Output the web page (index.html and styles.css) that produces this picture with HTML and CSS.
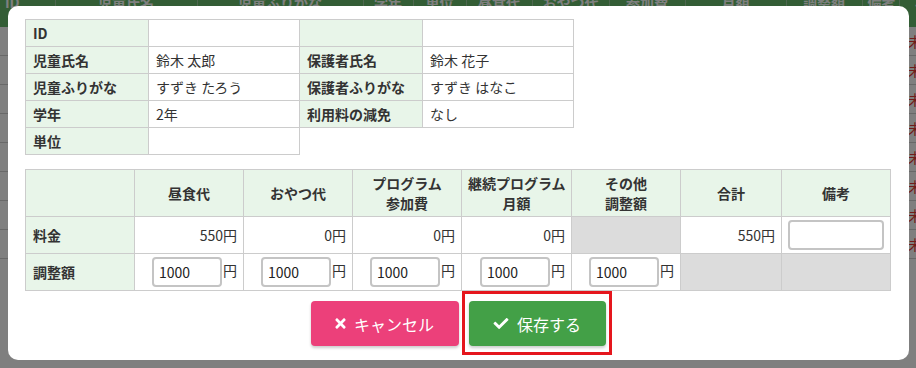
FILE: index.html
```html
<!DOCTYPE html>
<html lang="ja">
<head>
    <meta charset="UTF-8">
    <title>利用料金の編集</title>
    <link rel="stylesheet" href="styles.css">
</head>
<body>
    <!-- 背景の一覧 -->
    <table class="list">
        <colgroup>
            <col class="c55"><col class="c142"><col class="c166"><col class="c50"><col class="c53">
            <col class="c66"><col class="c77"><col class="c76"><col class="c101"><col class="c76">
            <col class="c37"><col class="c60">
        </colgroup>
        <thead>
            <tr>
                <th class="left">ID</th><th>児童氏名</th><th>児童ふりがな</th><th>学年</th><th>単位</th>
                <th>昼食代</th><th>おやつ代</th><th>参加費</th><th>月額</th><th>調整額</th><th>備考</th><th>状態</th>
            </tr>
        </thead>
        <tbody>
            <tr><td>1</td><td>鈴木 太郎</td><td>すずき たろう</td><td>2年</td><td></td><td>550円</td><td>0円</td><td>0円</td><td>0円</td><td></td><td></td><td class="state">未</td></tr>
            <tr><td>2</td><td>佐藤 一郎</td><td>さとう いちろう</td><td>3年</td><td></td><td>550円</td><td>0円</td><td>0円</td><td>0円</td><td></td><td></td><td class="state">未</td></tr>
            <tr><td>3</td><td>高橋 花</td><td>たかはし はな</td><td>1年</td><td></td><td>550円</td><td>0円</td><td>0円</td><td>0円</td><td></td><td></td><td class="state">未</td></tr>
            <tr><td>4</td><td>田中 健</td><td>たなか けん</td><td>4年</td><td></td><td>550円</td><td>0円</td><td>0円</td><td>0円</td><td></td><td></td><td class="state">未</td></tr>
            <tr><td>5</td><td>伊藤 葵</td><td>いとう あおい</td><td>2年</td><td></td><td>550円</td><td>0円</td><td>0円</td><td>0円</td><td></td><td></td><td class="state">未</td></tr>
            <tr><td>6</td><td>渡辺 翔</td><td>わたなべ しょう</td><td>5年</td><td></td><td>550円</td><td>0円</td><td>0円</td><td>0円</td><td></td><td></td><td class="state">未</td></tr>
            <tr><td>7</td><td>山本 結</td><td>やまもと ゆい</td><td>1年</td><td></td><td>550円</td><td>0円</td><td>0円</td><td>0円</td><td></td><td></td><td class="state">未</td></tr>
            <tr><td>8</td><td>中村 蓮</td><td>なかむら れん</td><td>6年</td><td></td><td>550円</td><td>0円</td><td>0円</td><td>0円</td><td></td><td></td><td class="state">未</td></tr>
        </tbody>
    </table>

    <div class="overlay"></div>

    <div class="modal">
        <table class="info">
            <colgroup><col class="w123"><col class="w151"><col class="w123"><col class="w151"></colgroup>
            <tr><th>ID</th><td></td><th></th><td></td></tr>
            <tr><th>児童氏名</th><td>鈴木 太郎</td><th>保護者氏名</th><td>鈴木 花子</td></tr>
            <tr><th>児童ふりがな</th><td>すずき たろう</td><th>保護者ふりがな</th><td>すずき はなこ</td></tr>
            <tr><th>学年</th><td>2年</td><th>利用料の減免</th><td>なし</td></tr>
            <tr><th>単位</th><td></td></tr>
        </table>

        <table class="fees">
            <colgroup>
                <col class="w109"><col class="w109"><col class="w109"><col class="w109">
                <col class="w110"><col class="w109"><col class="w101"><col class="w109">
            </colgroup>
            <tr>
                <th></th>
                <th>昼食代</th>
                <th>おやつ代</th>
                <th>プログラム<br>参加費</th>
                <th>継続プログラム<br>月額</th>
                <th>その他<br>調整額</th>
                <th>合計</th>
                <th>備考</th>
            </tr>
            <tr>
                <th class="row-label">料金</th>
                <td>550円</td>
                <td>0円</td>
                <td>0円</td>
                <td>0円</td>
                <td class="disabled"></td>
                <td>550円</td>
                <td><input type="text" class="field field-note"></td>
            </tr>
            <tr>
                <th class="row-label">調整額</th>
                <td><input type="text" class="field" value="1000">円</td>
                <td><input type="text" class="field" value="1000">円</td>
                <td><input type="text" class="field" value="1000">円</td>
                <td><input type="text" class="field" value="1000">円</td>
                <td><input type="text" class="field" value="1000">円</td>
                <td class="disabled"></td>
                <td class="disabled"></td>
            </tr>
        </table>

        <div class="actions">
            <button class="btn btn-cancel">
                <svg class="icon-times" viewBox="0 0 352 512"><path d="M242.72 256l100.07-100.07c12.28-12.28 12.28-32.19 0-44.48l-22.24-22.24c-12.28-12.28-32.19-12.28-44.48 0L176 189.28 75.93 89.21c-12.28-12.28-32.19-12.28-44.48 0L9.21 111.45c-12.28 12.28-12.28 32.19 0 44.48L109.28 256 9.21 356.07c-12.28 12.28-12.28 32.19 0 44.48l22.24 22.24c12.28 12.28 32.2 12.28 44.48 0L176 322.72l100.07 100.07c12.28 12.28 32.2 12.28 44.48 0l22.24-22.24c12.28-12.28 12.28-32.19 0-44.48L242.72 256z"/></svg>
                キャンセル
            </button>
            <button class="btn btn-save highlight">
                <svg class="icon-check" viewBox="0 0 512 512"><path d="M173.898 439.404l-166.4-166.4c-9.997-9.997-9.997-26.206 0-36.204l36.203-36.204c9.997-9.998 26.207-9.998 36.204 0L192 312.69 432.095 72.596c9.997-9.997 26.207-9.997 36.204 0l36.203 36.204c9.997 9.997 9.997 26.206 0 36.204l-294.4 294.401c-9.998 9.997-26.207 9.997-36.204-.001z"/></svg>
                保存する
            </button>
        </div>
    </div>
</body>
</html>
```

FILE: styles.css
```css
body {
    margin: 0;
    overflow: hidden;
    background: #fff;
    font-family: "Noto Sans CJK JP", "Noto Sans", sans-serif;
    color: #333;
}

/* 背景の一覧 */
.list {
    border-collapse: collapse;
    table-layout: fixed;
    width: 959px;
    font-size: 14px;
}
.c55 { width: 55px; }
.c142 { width: 142px; }
.c166 { width: 166px; }
.c50 { width: 50px; }
.c53 { width: 53px; }
.c66 { width: 66px; }
.c77 { width: 77px; }
.c76 { width: 76px; }
.c101 { width: 101px; }
.c37 { width: 37px; }
.c60 { width: 60px; }
.list th {
    height: 27px;
    padding: 0 5px;
    background: #66bb6a;
    color: #fff;
    font-weight: bold;
    line-height: 4px;
    vertical-align: top;
    white-space: nowrap;
    overflow: hidden;
    border-right: 1px solid #9ccc9e;
}
.list th.left {
    text-align: left;
}
.list td {
    height: 28px;
    padding: 0 6px;
    border-bottom: 1px solid #d0d0d0;
    text-align: center;
    white-space: nowrap;
    overflow: hidden;
}
.list td.state {
    color: #e53935;
    text-align: left;
    padding-left: 9px;
}

.overlay {
    position: fixed;
    top: 0;
    left: 0;
    right: 0;
    bottom: 0;
    background: rgba(0, 0, 0, 0.5);
}

/* モーダル */
.modal {
    position: fixed;
    top: 6px;
    left: 8px;
    width: 901px;
    height: 354px;
    box-sizing: border-box;
    padding: 13px 17px 0;
    background: #fff;
    border-radius: 10px;
}

.info, .fees {
    border-collapse: collapse;
    table-layout: fixed;
    font-size: 14px;
}
.info { width: 548px; }
.w123 { width: 123px; }
.w151 { width: 151px; }
.info th, .info td {
    border: 1px solid #ccc;
    padding: 3px 7px;
    line-height: 20px;
    text-align: left;
    white-space: nowrap;
}
.info th {
    background: #e8f5e9;
    font-weight: bold;
}

.fees {
    width: 865px;
    margin-top: 14px;
}
.w109 { width: 109px; }
.w110 { width: 110px; }
.w101 { width: 101px; }
.fees th, .fees td {
    border: 1px solid #ccc;
    padding: 3px 6px;
    line-height: 20px;
    white-space: nowrap;
}
.fees th {
    background: #e8f5e9;
    font-weight: bold;
    text-align: center;
}
.fees th.row-label {
    text-align: left;
    padding-left: 7px;
}
.fees td {
    text-align: right;
    height: 30px;
}
.fees td.disabled {
    background: #dcdcdc;
}

.field {
    width: 70px;
    height: 30px;
    box-sizing: border-box;
    margin: 0 1px 0 0;
    padding: 0 5px;
    border: 2px solid #c4c4c4;
    border-radius: 4px;
    font-family: inherit;
    font-size: 14px;
    color: #222;
    vertical-align: middle;
}
.field-note {
    width: 96px;
    height: 30px;
    margin: 0;
}

/* ボタン */
.actions {
    display: flex;
    justify-content: center;
    gap: 10px;
    margin-top: 10px;
}
.btn {
    position: relative;
    display: inline-flex;
    align-items: center;
    gap: 8px;
    height: 45px;
    padding: 0 25px 0 24px;
    border: none;
    border-radius: 4px;
    color: #fff;
    font-family: inherit;
    font-size: 16px;
    box-shadow: 0 2px 3px rgba(0, 0, 0, 0.2);
}
.btn svg {
    fill: #fff;
}
.icon-times {
    width: 11px;
    height: 15px;
}
.icon-check {
    width: 16px;
    height: 15px;
}
.btn-cancel {
    background: #ec407a;
}
.btn-save {
    background: #43a047;
}
.highlight::after {
    content: "";
    position: absolute;
    top: -10px;
    left: -7px;
    right: -6px;
    bottom: -9px;
    border: 3px solid #e5161d;
}
```
